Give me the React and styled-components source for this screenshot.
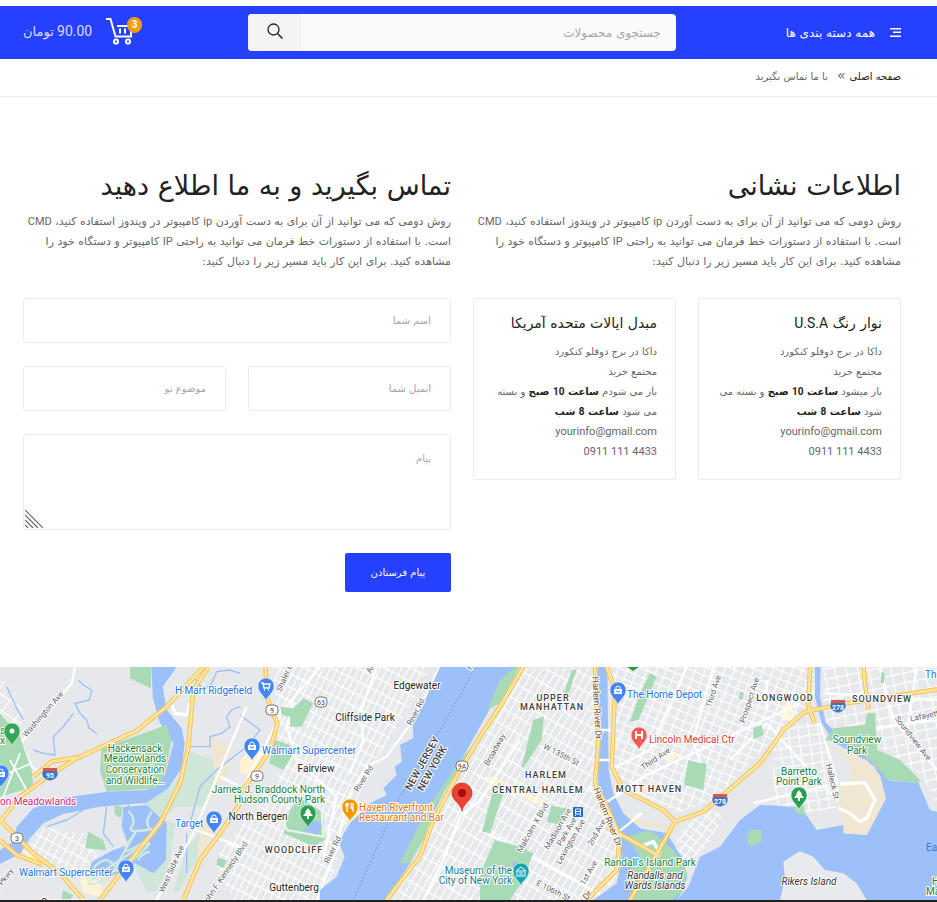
import React from "react";
import styled, { createGlobalStyle, css } from "styled-components";

const GlobalStyle = createGlobalStyle`
  *, *::before, *::after { box-sizing: border-box; }
  body {
    margin: 0;
    background: #fff;
    color: #666;
    font-family: "DejaVu Sans", Roboto, sans-serif;
    font-size: 11px;
    line-height: 20px;
  }
  h1, h2, h3, p, address { margin: 0; font-style: normal; font-weight: 400; }
  input, textarea, button { font-family: inherit; }
`;

const brand = "#2541ff";
const ink = "#222";
const line = "#ebebeb";

const Page = styled.div`
  padding-top: 6px;
`;

const Header = styled.header`
  background: ${brand};
`;

const Container = styled.div`
  padding: 0 25px 0 12px;
`;

const HeaderGrid = styled(Container)`
  display: grid;
  grid-template-columns: 1fr 2fr 1fr;
  align-items: center;
  min-height: 53px;
`;

const Cell = styled.div`
  min-width: 0;
  padding: 0 11px;
`;

const MenuButton = styled.button`
  display: flex;
  align-items: center;
  gap: 15px;
  padding: 0;
  border: 0;
  background: none;
  color: #fff;
  font-size: 12px;
  line-height: 20px;
  white-space: nowrap;
  cursor: pointer;
`;

const SearchForm = styled.form`
  display: flex;
  height: 37px;
  border-radius: 4px;
  overflow: hidden;
  background: #fafafa;
`;

const SearchInput = styled.input`
  flex: 1;
  min-width: 0;
  padding: 0 15px;
  border: 0;
  background: transparent;
  font-size: 12px;
  color: ${ink};
  &::placeholder { color: #a5a5a5; opacity: 1; }
`;

const SearchButton = styled.button`
  width: 53px;
  padding: 0 0 4px;
  border: 0;
  background: #f4f4f4;
  display: flex;
  align-items: center;
  justify-content: center;
  cursor: pointer;
`;

const CartLink = styled.a`
  display: flex;
  align-items: center;
  justify-content: flex-end;
  gap: 14px;
  padding-bottom: 3px;
  color: #d8ddff;
  text-decoration: none;
`;

const CartIcon = styled.span`
  position: relative;
  display: block;
  width: 36px;
  height: 30px;
`;

const Badge = styled.span`
  position: absolute;
  top: 1px;
  right: 0;
  width: 15px;
  height: 16px;
  border-radius: 8px;
  background: #f39a12;
  color: #fff;
  font-family: Roboto, sans-serif;
  font-size: 10px;
  font-weight: 700;
  line-height: 16px;
  text-align: center;
`;

const CartTotal = styled.span`
  font-family: Roboto, "DejaVu Sans", sans-serif;
  font-size: 13px;
  line-height: 20px;
  white-space: nowrap;
`;

const Amount = styled.span`
  font-size: 14px;
`;

const CrumbBar = styled.nav`
  border-bottom: 1px solid ${line};
`;

const CrumbList = styled.ol`
  display: flex;
  align-items: center;
  margin: 0;
  padding: 8px 11px 9px;
  list-style: none;
  font-size: 10px;
  line-height: 20px;
`;

const CrumbLink = styled.a`
  color: ${ink};
  text-decoration: none;
`;

const Crumb = styled.li`
  color: #666;
  & + &::before {
    content: "»";
    margin-inline: 4px 9px;
    font-size: 14px;
    line-height: 1;
  }
`;

const Main = styled.main`
  padding: 68px 0 75px;
`;

const Row = styled(Container)`
  display: grid;
  grid-template-columns: 1fr 1fr;
  align-items: start;
`;

const Title = styled.h2`
  margin-bottom: 5px;
  color: ${ink};
  font-size: 27px;
  line-height: 42px;
`;

const Intro = styled.p`
  margin-bottom: 26px;
  font-size: 11px;
  line-height: 20px;
`;

const Pair = styled.div`
  display: grid;
  grid-template-columns: 1fr 1fr;
  gap: 22px;
`;

const Card = styled.section`
  padding: 13px 18px 17px;
  border: 1px solid ${line};
  border-radius: 3px;
`;

const CardTitle = styled.h3`
  margin-bottom: 8px;
  color: ${ink};
  font-size: 14px;
  line-height: 22px;
`;

const CardBody = styled.address`
  font-size: 10px;
  line-height: 20px;
`;

const Latin = styled.span`
  font-family: Roboto, sans-serif;
`;

const Strong = styled.strong`
  color: ${ink};
  font-weight: 700;
`;

const ContactLink = styled.a`
  display: block;
  direction: ltr;
  text-align: right;
  color: inherit;
  font-family: Roboto, sans-serif;
  font-size: 11px;
  text-decoration: none;
`;

const Form = styled.form`
  display: flex;
  flex-direction: column;
  align-items: stretch;
  gap: 23px;
`;

const field = css`
  display: block;
  width: 100%;
  min-width: 0;
  border: 1px solid ${line};
  border-radius: 3px;
  background: #fff;
  color: ${ink};
  font-size: 10px;
  &::placeholder { color: #a5a5a5; opacity: 1; }
`;

const Field = styled.input`
  ${field}
  height: 45px;
  padding: 0 19px;
`;

const MessageBox = styled.div`
  position: relative;
`;

const Message = styled.textarea`
  ${field}
  height: 96px;
  padding: 14px 19px;
  line-height: 20px;
  resize: none;
`;

const Grip = styled.svg`
  position: absolute;
  left: 2px;
  bottom: 2px;
`;

const Submit = styled.button`
  align-self: flex-start;
  min-width: 106px;
  height: 39px;
  padding: 0 20px;
  border: 0;
  border-radius: 2px;
  background: ${brand};
  color: #fff;
  font-size: 10px;
  cursor: pointer;
`;

const MapFrame = styled.section`
  height: 235px;
  border-bottom: 2px solid #231f20;
  direction: ltr;
  overflow: hidden;
`;

const MapSvg = styled.svg`
  display: block;
  width: 100%;
  height: 100%;
`;

const Label = styled.text`
  font-family: Roboto, sans-serif;
  font-size: ${(p) => p.$size || 10}px;
  font-weight: ${(p) => p.$weight || 400};
  font-style: ${(p) => (p.$italic ? "italic" : "normal")};
  letter-spacing: ${(p) => (p.$spaced ? "1px" : "normal")};
  text-anchor: ${(p) => p.$anchor || "start"};
  fill: ${(p) => p.$color || "#3c4043"};
  stroke: #fff;
  stroke-width: ${(p) => (p.$plain ? 0 : 2)}px;
  stroke-linejoin: round;
  paint-order: stroke;
`;

function MenuIcon() {
  return (
    <svg width="11" height="12" viewBox="0 0 11 12" aria-hidden="true" shapeRendering="crispEdges">
      <path d="M0 1.500h11M3 5.500h8M0 9.500h11" stroke="#fff" fill="none" />
      <path d="M0 2.500h11M3 4.500h8M0 8.500h11" stroke="#fff" strokeOpacity=".5" fill="none" />
    </svg>
  );
}

function SearchIcon() {
  return (
    <svg width="16" height="16" viewBox="0 0 16 16" aria-hidden="true">
      <circle cx="6.5" cy="6.5" r="5.5" fill="none" stroke="#222" strokeWidth="1.3" />
      <path d="M10.5 10.5l5 5" stroke="#222" strokeWidth="1.5" />
    </svg>
  );
}

function Cart() {
  return (
    <svg width="28" height="30" viewBox="0 0 28 30" aria-hidden="true">
      <g fill="none" stroke="#fff">
        <path d="M0 3h4.5L9.500 20.500h15.500V10H11" strokeWidth="2" />
        <path d="M14 12.500v5M19 12.500v5" strokeWidth="2" />
        <circle cx="10" cy="25.500" r="2.1" strokeWidth="2" />
        <circle cx="22" cy="25.500" r="2.1" strokeWidth="2" />
      </g>
    </svg>
  );
}

/* Terrain is drawn in a 2811 x 699 space and scaled to a third. */
const water = [
  "M455 21L530 21L488 80L500 150L545 205L554 250L545 325L505 385L440 428L300 440L190 462L130 490L90 535L62 580L0 612V570L40 545L50 500L100 445L180 415L320 395L440 390L495 345L520 250L478 185L458 110Z",
  "M370 440L440 436L500 490L498 600L460 640L405 610L350 652L265 640L275 605L340 570L385 555L365 500Z",
  "M1320 21L1280 110L1238 185L1240 235L1200 255L1206 305L1184 320L1190 345L1150 385L1160 405L1110 430L1050 490L1016 545L1034 590L1010 650L960 690V720H1160L1230 610L1290 480L1350 360L1440 200L1490 110L1555 21Z",
  "M1792 21H1822L1826 330L1840 400L1870 460L1920 505L2000 520L2045 590L2062 650L2050 690L2030 720H1780L1850 670L1865 600L1860 540L1820 460L1795 380Z",
  "M2445 21H2462L2460 110L2478 190L2550 250L2610 300L2670 362L2755 368L2790 450L2811 455V720H2030L2065 680L2100 590L2160 560L2220 480L2280 435L2380 440L2415 460L2450 510L2530 495V520L2600 525L2655 410L2625 320L2570 285L2500 245L2465 190L2445 110Z",
];

const parks = [
  "M390 21H455L452 85L390 55Z",
  "M305 265L500 195L515 240L495 340L470 385L320 395L300 330Z",
  "M0 160L60 230L95 330L100 380L0 410Z",
  "M265 515L310 540L318 570L255 565Z",
  "M345 435L368 440L362 475L342 460Z",
  "M188 690L220 705L210 720H185Z",
  "M655 592L680 602L670 625L648 615Z",
  "M842 140L880 145L910 115L940 130L905 200L872 200L870 170L845 165Z",
  "M825 240L870 255L880 280L850 330L808 310Z",
  "M905 405L970 460L975 540L940 560L850 520L870 450Z",
  "M1500 60L1545 21H1560L1500 130L1462 150Z",
  "M1440 230L1395 300L1310 430L1270 540L1230 610H1200L1280 450L1380 300Z",
  "M1600 180L1632 170L1625 240L1570 325L1565 320Z",
  "M1730 28L1710 90L1690 130L1685 120L1715 30Z",
  "M1500 365L1510 400L1470 520L1446 515L1480 390Z",
  "M1485 540L1560 560L1600 580L1570 660L1530 720H1440V640Z",
  "M1655 437L1700 445L1685 495L1640 485Z",
  "M1950 40L1970 50L1915 180L1890 185L1920 100Z",
  "M2065 300L2120 315L2110 390L2052 375Z",
  "M1880 530L1950 510L2020 570L2062 640L2045 695L2015 720H1900L1890 620L1920 590Z",
  "M2260 205L2285 195L2292 225L2260 237Z",
  "M2100 310H2118L2112 370L2100 390Z",
  "M2500 205L2595 195L2600 160H2625L2632 270L2700 300L2760 360L2755 370L2665 360L2600 290L2540 250L2475 240Z",
  "M2380 440L2412 435L2416 465L2388 460Z",
  "M2250 510L2285 510L2285 545L2250 560L2240 535Z",
  "M2220 95L2232 98L2228 120L2216 118Z",
  "M2644 35L2655 40L2652 70L2642 68Z",
];

const paleParks = [
  "M560 270L640 300L645 360L610 440L530 440L490 470L430 435L510 380L550 340Z",
  "M495 480L525 490L510 600L480 690L440 700L405 620L460 560Z",
  "M560 560L600 520L590 600L540 690L520 700Z",
  "M2260 600L2285 605L2280 620L2262 610Z",
];

const sand = [
  "M625 225L690 260L685 330L650 400L625 430L640 330Z",
  "M600 480L640 500L610 590L590 570Z",
  "M1830 440L1920 480L1980 490L2040 520L1980 500L1900 495Z",
];

/* The spit east of Halleck St, drawn over the water. */
const spit =
  "M2480 250L2560 285L2600 300L2640 345L2658 415L2625 480L2600 525L2532 520V500L2515 440V375L2560 350L2545 300Z";

const commercial = [
  "M60 560L110 590L130 620L90 610Z",
  "M240 650L300 665L310 710L250 700Z",
  "M720 300L765 260L800 290L760 350L722 340Z",
  "M1060 420L1100 430L1060 490L1045 470Z",
  "M1440 355L1480 350L1650 430L1640 445Z",
  "M1990 270L2040 285L2020 300L1980 290Z",
  "M2350 130L2380 130V180H2345Z",
];

const islands = [
  "M2350 605L2400 573L2440 590L2475 630L2530 640L2570 670L2600 720H2340L2355 660Z",
];

const grids = [
  { id: "g1", angle: 28, w: 22, h: 34, d: "M110 500L250 520L300 600L260 650L130 610L90 560Z" },
  { id: "g2", angle: 27, w: 19, h: 36, d: "M820 21H1290L1220 160L1120 310L1080 400L1040 500L1000 640L950 720H700L640 600L720 500L840 340Z" },
  { id: "g3", angle: 30, w: 20, h: 42, d: "M1555 25H1785V360L1850 560L1850 660L1770 720H1180L1270 560L1420 290Z" },
  { id: "g4", angle: 22, w: 27, h: 25, d: "M1830 21H2440L2450 110L2400 160L2220 340L2140 420L2040 460L1900 400L1840 330Z" },
  { id: "g5", angle: -8, w: 30, h: 28, d: "M2320 200L2460 180L2520 440L2430 460L2320 430Z" },
  { id: "g6", angle: -12, w: 33, h: 30, d: "M2470 21H2811V440L2770 350L2640 260L2580 200L2470 190Z" },
  { id: "g7", angle: 38, w: 22, h: 26, d: "M2030 520L2120 450L2170 460L2130 550L2030 640Z" },
  { id: "g8", angle: 35, w: 46, h: 40, d: "M0 60L40 80L70 160L60 230L0 180Z" },
];

const streams = [
  "M235 60L250 75L275 90L268 120L225 130L240 160L260 180L268 205L290 220",
  "M220 160L190 200L160 230L165 285L130 280L100 270",
  "M720 40L690 30L650 35L635 70L610 90L580 50",
  "M720 140L695 150L680 170L690 200L665 220L630 230V260H570",
  "M720 165L780 210L740 260L650 330L600 380L570 490",
  "M20 80L50 145L70 180",
  "M320 440L310 520L340 560M250 450L200 480L140 500",
  "M385 440V405M560 520V640M440 530L500 560",
];

const marsh = [
  "M385 452Q410 480 395 500T440 510T425 550T390 540T370 580T410 590T345 610T360 640",
  "M280 625Q310 590 330 605T345 630T300 640M455 455Q435 480 445 500T485 492M450 575Q425 580 415 600",
];

const streets = [
  "M225 21L215 70L0 320M0 160L60 240L95 320L150 360",
  "M20 270L95 350M0 330L85 300M10 380L60 280",
  "M660 350L720 380M740 140L580 520L470 720M590 510L720 560",
  "M880 130L860 200L890 300L1010 410L990 500L970 600",
  "M1320 21L1240 180L1160 290L1100 320L1050 400L990 620L950 720",
  "M1130 21L1080 160L1090 240L1050 340M960 21L850 150L720 400",
  "M1560 240L1440 420L1380 470L1330 600L1270 720",
  "M1440 510L1500 540L1830 720M1830 60L1920 90L2050 110M1820 430L1930 350L2100 270L2400 130",
  "M2060 21L1980 200L1950 270L1830 330M2140 21L2080 240L2110 340",
  "M2190 300L2300 190L2400 300L2520 430M2260 430L2510 370M2300 60L2300 150M2460 190L2510 360L2520 440",
  "M2640 21L2680 180L2811 330M2470 100L2811 120M2570 210L2811 180M2750 21L2720 220",
  "M1855 520L1920 460M1770 380L1810 440M1780 210H1835M1780 300H1830",
];

const wideStreets = [
  "M2520 372L2595 368L2625 420L2600 475L2580 485L2550 460L2515 445",
  "M1920 560L1960 545L1980 580",
  "M510 120L525 160L560 165L570 130",
];

const highways = [
  "M0 485L60 410L150 345L230 295L410 212L500 140L610 21",
  "M100 350L155 305L245 290",
  "M625 21L580 90L565 260L540 370L480 490L400 590L300 720",
  "M0 480L100 580L180 640L250 720M0 540L50 585L130 615",
  "M720 430L660 520L600 600L550 720",
  "M797 21L800 110L832 190L810 270L760 345L720 400",
  "M1570 21L1500 140L1440 230L1380 330L1300 480L1260 590L1220 640L1160 720",
  "M1785 21L1795 250L1785 370L1820 440L1860 530L1850 630L1760 720",
  "M1820 21L1845 90L1835 320L1870 390L1990 450L2025 485L1960 600L1890 720",
  "M2025 485L2110 455L2280 310L2350 210L2415 155L2540 130L2811 88",
  "M2430 21L2425 140L2445 190M2590 21L2605 150",
  "M1820 500L1920 555L1980 590",
];

const pinPath = "M0 14C-1 9-8 6-8-1A8 8 0 1 1 8-1C8 6 1 9 0 14Z";

const glyphs = {
  bag: (
    <g>
      <path d="M-4-2h8v5h-8z" fill="#fff" />
      <path d="M-2-2v-2q2-2 4 0v2" fill="none" stroke="#fff" />
      <path d="M-2 0q2 2 4 0" fill="none" stroke="#4285f4" />
    </g>
  ),
  cart: <path d="M-5-4h2l1 5h5l1-4h-6M-2 3h1M2 3h1" fill="none" stroke="#fff" strokeWidth="1.5" />,
  tree: <path d="M0-6L3-2H2L5 2H1V5H-1V2H-5L-2-2H-3Z" fill="#fff" />,
  dot: <circle r="2.5" cy="-1" fill="#fff" />,
  food: <path d="M-3-5v9M-4-5v3h2v-3M3-5v9M1-5v5h2" fill="none" stroke="#fff" strokeWidth="1.3" />,
  hospital: <path d="M-3-5v8M3-5v8M-3-1h6" fill="none" stroke="#fff" strokeWidth="2" />,
  museum: <path d="M-5-1L0-5 5-1ZM-4 0v3M-1 0v3M1 0v3M4 0v3M-5 4h10" fill="none" stroke="#fff" />,
};

const pins = [
  [12, 65, "#34a853", "dot"],
  [1, 107, "#4285f4", "bag"],
  [126, 202, "#4285f4", "bag"],
  [214, 153, "#4285f4", "bag"],
  [266, 20, "#4285f4", "cart"],
  [252, 80, "#4285f4", "bag"],
  [308, 147, "#2a9d4f", "tree"],
  [350, 141, "#f29900", "food"],
  [618, 24, "#4285f4", "bag"],
  [639, 69, "#ee5c54", "hospital"],
  [521, 205, "#12a5b5", "museum"],
  [799, 129, "#2a9d4f", "tree"],
];

const green = "#188038";
const blue = "#1a73e8";
const road = "#5f6368";
const brown = "#7a4a1c";

const labels = [
  ["H Mart Ridgefield", 175, 27, { $color: blue }],
  ["Walmart Supercenter", 262, 87, { $color: blue }],
  ["Walmart Supercenter", 19, 209, { $color: blue }],
  ["Target", 175, 160, { $color: blue }],
  ["The Home Depot", 627, 31, { $color: blue }],
  ["Th", 925, 11, { $color: blue }],
  ["Eas", 926, 184, { $color: "#4a76c9", $plain: true }],
  ["Hackensack", 135, 85, { $color: green, $anchor: "middle" }],
  ["Meadowlands", 135, 95, { $color: green, $anchor: "middle" }],
  ["Conservation", 135, 106, { $color: green, $anchor: "middle" }],
  ["and Wildlife…", 135, 117, { $color: green, $anchor: "middle" }],
  ["on Meadowlands", 0, 138, { $color: "#e3257b" }],
  ["James J. Braddock North", 325, 126, { $color: green, $anchor: "end" }],
  ["Hudson County Park", 325, 136, { $color: green, $anchor: "end" }],
  ["Haven Riverfront", 359, 144, { $color: "#e37400" }],
  ["Restaurant and Bar", 359, 154, { $color: "#e37400" }],
  ["Museum of the", 512, 207, { $color: "#11808d", $anchor: "end" }],
  ["City of New York", 512, 217, { $color: "#11808d", $anchor: "end" }],
  ["Lincoln Medical Ctr", 649, 76, { $color: "#d93a33" }],
  ["Barretto", 799, 108, { $color: green, $anchor: "middle" }],
  ["Point Park", 799, 118, { $color: green, $anchor: "middle" }],
  ["Soundview", 857, 76, { $color: green, $anchor: "middle" }],
  ["Park", 857, 87, { $color: green, $anchor: "middle" }],
  ["Randall's Island Park", 650, 199, { $color: green, $anchor: "middle" }],
  ["Randalls and", 655, 212, { $color: "#333", $anchor: "middle", $italic: true }],
  ["Wards Islands", 655, 222, { $color: "#333", $anchor: "middle", $italic: true }],
  ["Rikers Island", 809, 218, { $color: "#333", $anchor: "middle", $italic: true }],
  ["H", 932, 218, { $color: green }],
  ["Ma", 926, 228, { $color: green }],
  ["s", 0, 67, { $color: green }],
  ["x", 0, 77, { $color: green }],
  ["Edgewater", 417, 22, { $anchor: "middle", $color: "#222" }],
  ["Cliffside Park", 365, 54, { $anchor: "middle", $color: "#222" }],
  ["Fairview", 316, 105, { $anchor: "middle", $color: "#222" }],
  ["North Bergen", 258, 153, { $anchor: "middle", $color: "#222" }],
  ["Guttenberg", 294, 224, { $anchor: "middle", $color: "#222" }],
  ["Secaucus", 63, 239, { $anchor: "middle", $color: "#222" }],
  ["WOODCLIFF", 294, 186, { $anchor: "middle", $size: 9, $spaced: true }],
  ["UPPER", 553, 34, { $anchor: "middle", $size: 9, $spaced: true }],
  ["MANHATTAN", 552, 43, { $anchor: "middle", $size: 9, $spaced: true }],
  ["HARLEM", 546, 111, { $anchor: "middle", $size: 9, $spaced: true }],
  ["CENTRAL HARLEM", 538, 126, { $anchor: "middle", $size: 9, $spaced: true }],
  ["MOTT HAVEN", 649, 125, { $anchor: "middle", $size: 9, $spaced: true }],
  ["LONGWOOD", 785, 34, { $anchor: "middle", $size: 9, $spaced: true }],
  ["SOUNDVIEW", 882, 35, { $anchor: "middle", $size: 9, $spaced: true }],
];

const turned = [
  ["Washington Ave", 45, 49, -49, road, 8],
  ["West Side Ave", 174, 203, -66, road, 8],
  ["n Pkwy", 6, 214, -52, road, 8],
  ["John F. Kennedy Blvd", 227, 208, -56, road, 8],
  ["Shaler Blvd", 289, 7, -66, road, 8],
  ["Anderson", 379, -8, -60, road, 8],
  ["River Rd", 418, 46, -62, road, 8],
  ["River Rd", 366, 113, -58, road, 8],
  ["River Rd", 335, 184, -64, road, 8],
  ["NEW JERSEY", 425, 98, -61, "#3c4043", 10],
  ["NEW YORK", 435, 103, -61, "#3c4043", 10],
  ["Broadway", 497, 84, -60, road, 8],
  ["W 135th St", 560, 90, 27, road, 8],
  ["Malcolm X Blvd", 535, 162, -60, road, 8],
  ["Madison Ave", 560, 163, -60, road, 8],
  ["Park Ave", 569, 166, -60, road, 8],
  ["Lexington Ave", 573, 176, -60, road, 8],
  ["2nd Ave", 599, 167, -60, road, 8],
  ["1st Ave", 591, 207, -60, road, 8],
  ["E 106th St", 552, 226, 27, road, 8],
  ["Third Ave", 657, 94, -34, road, 8],
  ["Third Ave", 716, 25, -72, road, 8],
  ["Prospect Ave", 752, 34, -72, road, 8],
  ["Halleck St", 830, 115, 77, road, 8],
  ["Soundview Ave", 911, 73, 52, road, 8],
  ["Lafayette", 927, 51, -12, road, 8],
  ["Harlem River Dr", 594, 41, 87, brown, 9],
  ["Harlem River Dr", 605, 151, 68, brown, 9],
  ["r Dr", 588, 232, -50, brown, 9],
  ["Hudson", 479, -10, -62, "#4a76c9", 9],
];

const shields = [
  ["3", 17, 171], ["9", 272, 43], ["9", 257, 109], ["63", 321, 35], ["9A", 462, 99],
];

const interstates = [["95", 50, 107], ["278", 720, 133], ["278", 838, 39]];

function CityMap() {
  return (
    <MapSvg viewBox="0 0 937 233" preserveAspectRatio="xMidYMid slice" role="img" aria-label="Map">
      <defs>
        {grids.map((g) => (
          <pattern key={g.id} id={g.id} width={g.w} height={g.h} patternUnits="userSpaceOnUse" patternTransform={`rotate(${g.angle})`}>
            <path d={`M0 0V${g.h}M0 0H${g.w}`} stroke="#fff" strokeWidth="7" fill="none" />
          </pattern>
        ))}
      </defs>
      <rect width="937" height="233" fill="#e6e8eb" />
      <g transform="scale(.33333) translate(0 -21)" fill="none" strokeLinejoin="round">
        {commercial.map((d) => <path key={d} d={d} fill="#fef4d4" />)}
        {sand.map((d) => <path key={d} d={d} fill="#f0e6d2" />)}
        {paleParks.map((d) => <path key={d} d={d} fill="#d0e6d9" />)}
        {grids.map((g) => <path key={g.id} d={g.d} fill={`url(#${g.id})`} />)}
        {streams.map((d) => <path key={d} d={d} stroke="#9cc0f9" strokeWidth="4" />)}
        {streets.map((d) => <path key={d} d={d} stroke="#fff" strokeWidth="7" />)}
        {water.map((d) => <path key={d} d={d} fill="#9cc0f9" />)}
        <path d={spit} fill="#f0e6d2" />
        {parks.map((d) => <path key={d} d={d} fill="#a8dab5" />)}
        {islands.map((d) => <path key={d} d={d} fill="#e8eaed" />)}
        <path d="M917 500L935 480L970 492L950 525L930 515L915 525Z" fill="#9cc0f9" />
        <path d="M1535 610L1550 605L1575 625L1545 640Z" fill="#9cc0f9" />
        <path d="M0 350L95 310M10 410L60 280M30 300L80 390" stroke="#fff" strokeWidth="5" />
        <path d="M860 440L900 410L965 450L970 530L860 510L850 480" stroke="#eef4ef" strokeWidth="6" />
        {marsh.map((d) => <path key={d} d={d} stroke="#d3e8dc" strokeWidth="7" />)}
        {wideStreets.map((d) => <path key={d} d={d} stroke="#fff" strokeWidth="10" />)}
        <path d="M1780 210H1835M1780 300H1830M1850 520L1925 460M1800 440L1860 400" stroke="#fff" strokeWidth="7" />
        {highways.map((d) => <path key={d} d={d} stroke="#f8c454" strokeWidth="14" />)}
        {highways.map((d) => <path key={d} d={d} stroke="#fff0c2" strokeWidth="7" />)}
        {highways.map((d) => <path key={d} d={d} stroke="#fbd26d" strokeWidth="2" />)}
        <path d="M1425 21L1390 90L1190 430L1060 720" stroke="#6c8fc4" strokeWidth="3" strokeDasharray="5 6" />
      </g>
      {turned.map(([text, x, y, angle, color, size]) => (
        <g key={text + x} transform={`translate(${x} ${y}) rotate(${angle})`}>
          <Label $color={color} $size={size} $anchor="middle" $weight={size === 10 ? 500 : 400}>{text}</Label>
        </g>
      ))}
      {labels.map(([text, x, y, look]) => (
        <Label key={text + x + y} x={x} y={y} {...look} $weight={look.$spaced ? 500 : 400}>{text}</Label>
      ))}
      {shields.map(([text, x, y]) => (
        <g key={x} transform={`translate(${x} ${y})`}>
          <rect x="-6" y="-5" width="12" height="10" rx="4" fill="#fff" stroke="#777" />
          <Label y="3" $size={7} $anchor="middle" $plain>{text}</Label>
        </g>
      ))}
      {interstates.map(([text, x, y]) => (
        <g key={x} transform={`translate(${x} ${y})`}>
          <path d="M-7-4H7Q11 4 0 7Q-11 4-7-4Z" fill="#3f72c4" stroke="#fff" strokeWidth=".5" />
          <path d="M-7-6H7V-3H-7Z" fill="#dd5549" />
          <Label y="4" $size={7} $weight={700} $anchor="middle" $color="#fff" $plain>{text}</Label>
        </g>
      ))}
      <g transform="translate(578 145)">
        <rect x="-5" y="-5" width="10" height="10" rx="1" fill="#1a67d8" />
        <path d="M-2.500-3h5v5h-5zM-2.500-.5h5M-2 2.500l-1 1.500M2 2.500l1 1.500" stroke="#fff" fill="none" />
      </g>
      <path d="M627 0H639L633 4Z" fill="#2a9d4f" />
      {pins.map(([x, y, color, icon]) => (
        <g key={`${x}-${y}`} transform={`translate(${x} ${y})`}>
          <path d={pinPath} fill={color} stroke="#fff" strokeWidth=".5" />
          {glyphs[icon]}
        </g>
      ))}
      <g transform="translate(462 127)">
        <path d="M0 17C-1 9-10 7-10-1A10 10 0 1 1 10-1C10 7 1 9 0 17Z" fill="#ea4335" stroke="#c5221f" strokeWidth=".7" />
        <circle cy="-1" r="4" fill="#a50e0e" />
      </g>
    </MapSvg>
  );
}

function IntroText() {
  return (
    <Intro>
      روش دومی که می توانید از آن برای به دست آوردن <Latin>ip</Latin> کامپیوتر در ویندوز استفاده کنید، <Latin>CMD</Latin> است. با استفاده از دستورات خط فرمان می توانید به راحتی <Latin>IP</Latin> کامپیوتر و دستگاه خود را مشاهده کنید. برای این کار باید مسیر زیر را دنبال کنید:
    </Intro>
  );
}

const offices = [
  { id: "usa", title: <>نوار رنگ <Latin>U.S.A</Latin></>, open: "باز میشود" },
  { id: "exchange", title: "مبدل ایالات متحده آمریکا", open: "باز می شودم" },
];

function OfficeCard({ title, open }) {
  return (
    <Card>
      <CardTitle>{title}</CardTitle>
      <CardBody>
        داکا در برج دوقلو کنکورد
        <br />
        مجتمع خرید
        <br />
        {open} <Strong>ساعت <Latin>10</Latin> صبح</Strong> و بسته می شود <Strong>ساعت <Latin>8</Latin> شب</Strong>
        <ContactLink href="mailto:yourinfo@gmail.com">yourinfo@gmail.com</ContactLink>
        <ContactLink href="tel:09111114433">0911 111 4433</ContactLink>
      </CardBody>
    </Card>
  );
}

export default function App() {
  return (
    <Page dir="rtl" lang="fa">
      <GlobalStyle />
      <Header>
        <HeaderGrid>
          <Cell>
            <MenuButton type="button">
              <MenuIcon />
              همه دسته بندی ها
            </MenuButton>
          </Cell>
          <Cell>
            <SearchForm role="search">
              <SearchInput type="text" placeholder="جستجوی محصولات" aria-label="جستجوی محصولات" />
              <SearchButton type="button" aria-label="جستجو">
                <SearchIcon />
              </SearchButton>
            </SearchForm>
          </Cell>
          <Cell>
            <CartLink href="#cart">
              <CartIcon dir="ltr">
                <Cart />
                <Badge>3</Badge>
              </CartIcon>
              <CartTotal><Amount>90.00</Amount> تومان</CartTotal>
            </CartLink>
          </Cell>
        </HeaderGrid>
      </Header>
      <CrumbBar aria-label="مسیر">
        <Container>
          <CrumbList>
            <Crumb><CrumbLink href="#home">صفحه اصلی</CrumbLink></Crumb>
            <Crumb>با ما تماس بگیرید</Crumb>
          </CrumbList>
        </Container>
      </CrumbBar>
      <Main>
        <Row>
          <Cell>
            <Title>اطلاعات نشانی</Title>
            <IntroText />
            <Pair>
              {offices.map((o) => <OfficeCard key={o.id} title={o.title} open={o.open} />)}
            </Pair>
          </Cell>
          <Cell>
            <Title>تماس بگیرید و به ما اطلاع دهید</Title>
            <IntroText />
            <Form>
              <Field type="text" placeholder="اسم شما" aria-label="اسم شما" />
              <Pair>
                <Field type="email" dir="rtl" placeholder="ایمیل شما" aria-label="ایمیل شما" />
                <Field type="text" placeholder="موضوع تو" aria-label="موضوع تو" />
              </Pair>
              <MessageBox>
                <Message placeholder="پیام" aria-label="پیام" />
                <Grip width="18" height="18" viewBox="0 0 18 18" aria-hidden="true">
                  <path d="M0 0L18 18M0 5L13 18M0 10L8 18M0 15L3 18" stroke="#666" strokeWidth="1.2" />
                </Grip>
              </MessageBox>
              <Submit type="button">پیام فرستادن</Submit>
            </Form>
          </Cell>
        </Row>
      </Main>
      <MapFrame>
        <CityMap />
      </MapFrame>
    </Page>
  );
}
